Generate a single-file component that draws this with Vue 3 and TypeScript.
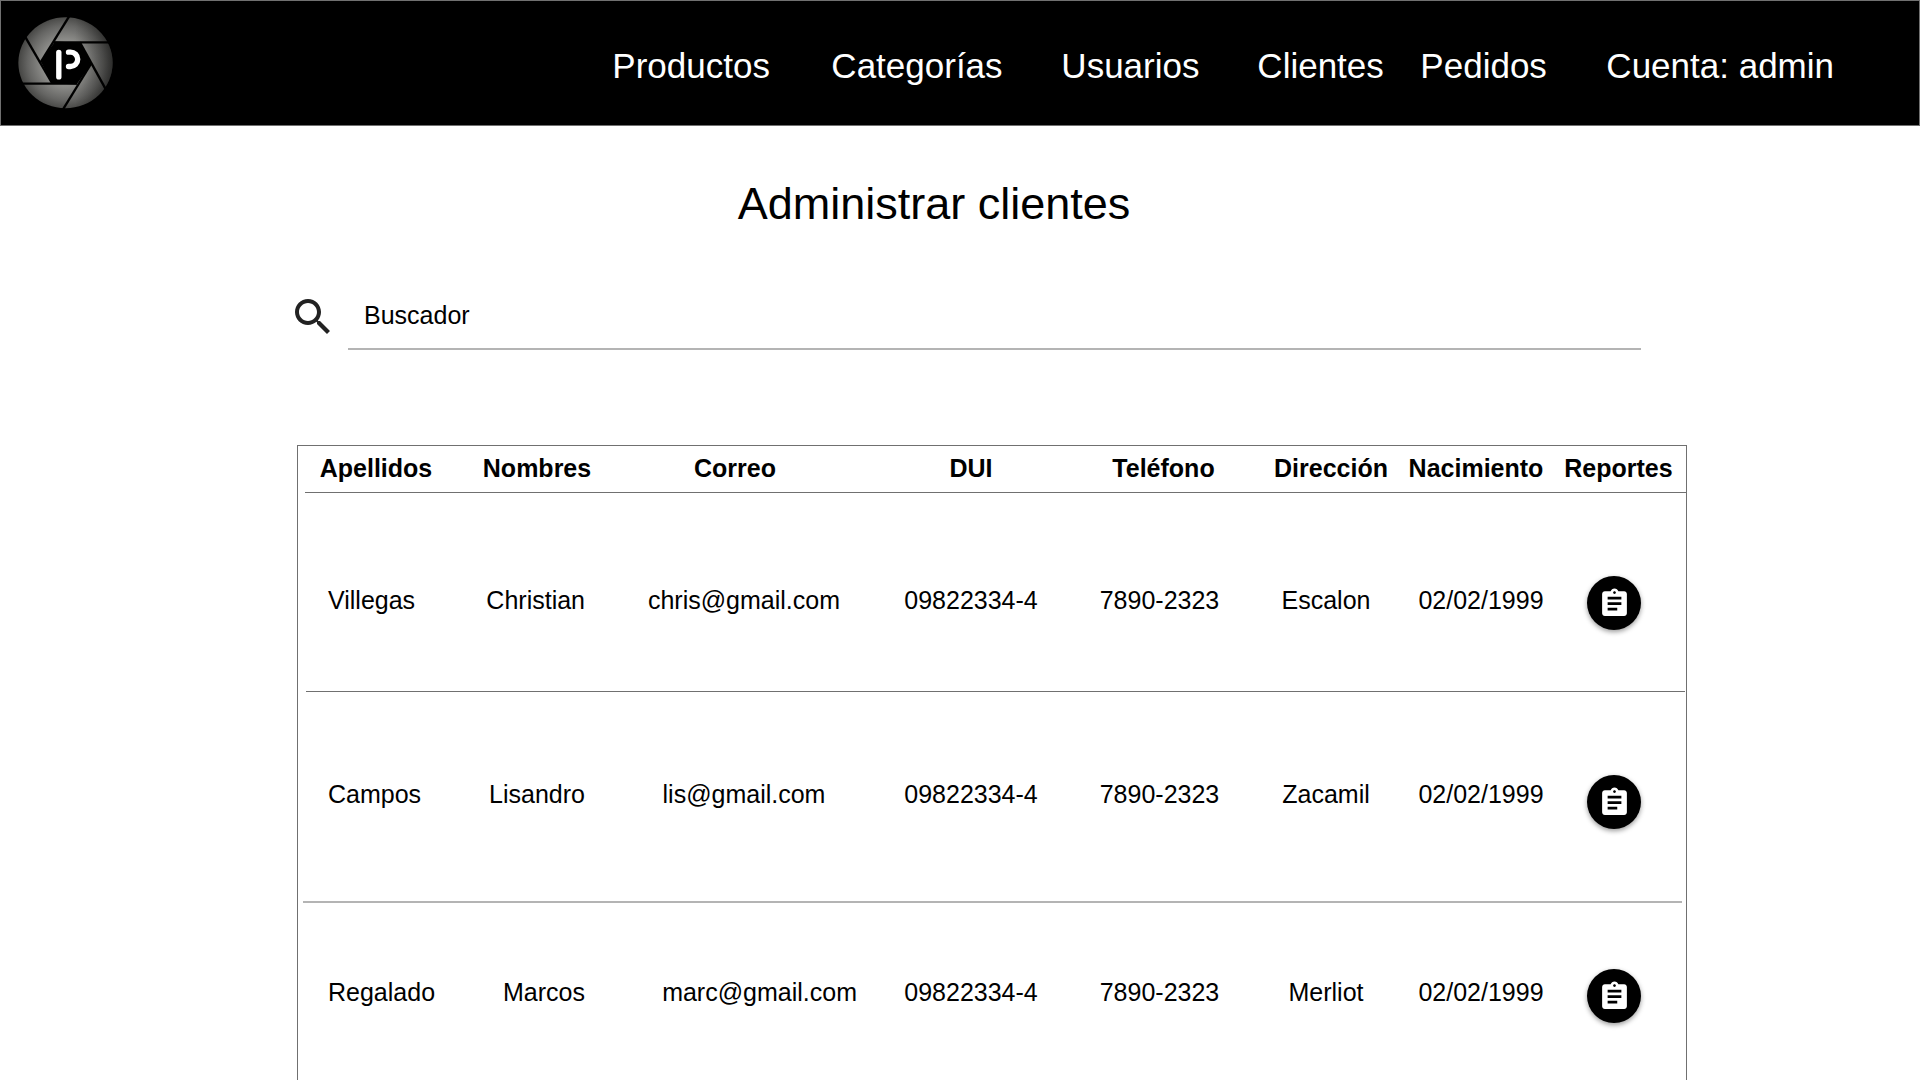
<script setup lang="ts">
import { ref } from 'vue'

interface Cliente {
  apellidos: string
  nombres: string
  correo: string
  dui: string
  telefono: string
  direccion: string
  nacimiento: string
}

const enlaces: string[] = ['Productos', 'Categorías', 'Usuarios', 'Clientes', 'Pedidos', 'Cuenta: admin']

const clientes: Cliente[] = [
  { apellidos: 'Villegas', nombres: 'Christian', correo: 'chris@gmail.com', dui: '09822334-4', telefono: '7890-2323', direccion: 'Escalon', nacimiento: '02/02/1999' },
  { apellidos: 'Campos', nombres: 'Lisandro', correo: 'lis@gmail.com', dui: '09822334-4', telefono: '7890-2323', direccion: 'Zacamil', nacimiento: '02/02/1999' },
  { apellidos: 'Regalado', nombres: 'Marcos', correo: 'marc@gmail.com', dui: '09822334-4', telefono: '7890-2323', direccion: 'Merliot', nacimiento: '02/02/1999' },
]

const busqueda = ref('')
</script>

<template>
  <div class="page">
    <header class="topbar">
      <a class="brand" href="#" aria-label="Inicio">
        <svg class="logo" viewBox="54 51 284 275" preserveAspectRatio="none" aria-hidden="true">
          <defs>
            <radialGradient id="metal" gradientUnits="userSpaceOnUse" cx="196" cy="188" r="141">
              <stop offset="0" stop-color="#a2a29f" />
              <stop offset="0.5" stop-color="#8b8b88" />
              <stop offset="0.8" stop-color="#656563" />
              <stop offset="1" stop-color="#454543" />
            </radialGradient>
            <linearGradient id="shade" x1="0" y1="0" x2="1" y2="0">
              <stop offset="0.6" stop-color="#000" stop-opacity="0" />
              <stop offset="1" stop-color="#000" stop-opacity="0.35" />
            </linearGradient>
          </defs>
          <ellipse cx="196" cy="188" rx="141" ry="136" fill="url(#metal)" />
          <ellipse cx="196" cy="188" rx="141" ry="136" fill="url(#shade)" />
          <path d="M165 124 240 128 273 192 229 253 154 249 122 183Z" fill="#000" />
          <g stroke="#000" stroke-width="7">
            <path d="M207 49 122 186" />
            <path d="M160 127H326" />
            <path d="M239 127 317 268" />
            <path d="M273 190 188 328" />
            <path d="M231 250H64" />
            <path d="M156 249 76 111" />
          </g>
          <g fill="none" stroke="#fff" stroke-width="16" stroke-linecap="round">
            <path d="M176 157V230" />
            <path d="M205 156H211A21 21 0 0 1 211 199H205" />
          </g>
        </svg>
      </a>
      <nav class="menu" aria-label="Principal">
        <a v-for="enlace in enlaces" :key="enlace" href="#">{{ enlace }}</a>
      </nav>
    </header>

    <h1 class="title">Administrar clientes</h1>

    <main class="content">
      <form class="search" role="search" @submit.prevent>
        <label for="buscador" aria-label="Buscador">
          <svg viewBox="0 0 24 24" aria-hidden="true">
            <path d="M15.5 14h-.79l-.28-.27C15.41 12.59 16 11.11 16 9.5 16 5.91 13.09 3 9.5 3S3 5.91 3 9.5 5.91 16 9.5 16c1.61 0 3.09-.59 4.23-1.57l.27.28v.79l5 4.99L20.49 19l-4.99-5zm-6 0C7.01 14 5 11.99 5 9.5S7.01 5 9.5 5 14 7.01 14 9.5 11.99 14 9.5 14z" />
          </svg>
        </label>
        <input id="buscador" v-model="busqueda" type="text" placeholder="Buscador" />
      </form>

      <section class="panel">
        <table>
          <colgroup>
            <col class="w-apellidos" />
            <col class="w-nombres" />
            <col class="w-correo" />
            <col class="w-dui" />
            <col class="w-telefono" />
            <col class="w-direccion" />
            <col class="w-nacimiento" />
            <col class="w-reportes" />
          </colgroup>
          <thead>
            <tr>
              <th scope="col">Apellidos</th>
              <th scope="col">Nombres</th>
              <th scope="col" class="correo">Correo</th>
              <th scope="col">DUI</th>
              <th scope="col" class="telefono">Teléfono</th>
              <th scope="col" class="direccion">Dirección</th>
              <th scope="col" class="nacimiento">Nacimiento</th>
              <th scope="col" class="reportes">Reportes</th>
            </tr>
          </thead>
          <tbody>
            <tr v-for="cliente in clientes" :key="cliente.apellidos">
              <td class="apellidos">{{ cliente.apellidos }}</td>
              <td class="nombres">{{ cliente.nombres }}</td>
              <td class="correo">{{ cliente.correo }}</td>
              <td>{{ cliente.dui }}</td>
              <td>{{ cliente.telefono }}</td>
              <td>{{ cliente.direccion }}</td>
              <td>{{ cliente.nacimiento }}</td>
              <td class="reportes">
                <button type="button" :aria-label="`Reporte de ${cliente.nombres} ${cliente.apellidos}`">
                  <svg viewBox="0 0 24 24" aria-hidden="true">
                    <path d="M19 3h-4.18C14.4 1.84 13.3 1 12 1c-1.3 0-2.4.84-2.82 2H5c-1.1 0-2 .9-2 2v14c0 1.1.9 2 2 2h14c1.1 0 2-.9 2-2V5c0-1.1-.9-2-2-2zm-7 0c.55 0 1 .45 1 1s-.45 1-1 1-1-.45-1-1 .45-1 1-1zm2 14H7v-2h7v2zm3-4H7v-2h10v2zm0-4H7V7h10v2z" />
                  </svg>
                </button>
              </td>
            </tr>
          </tbody>
        </table>
      </section>
    </main>
  </div>
</template>

<style>
body {
  margin: 0;
  background: #fff;
}
</style>

<style scoped>
.page {
  display: flex;
  flex-direction: column;
  min-height: 100vh;
  box-sizing: border-box;
  color: #000;
  font-family: "Liberation Sans", Arial, sans-serif;
  font-size: 25px;
  line-height: 28px;
}

.topbar {
  display: flex;
  align-items: center;
  justify-content: space-between;
  box-sizing: border-box;
  height: 126px;
  padding: 0 85px 0 17px;
  border: 1px solid #707070;
  background: #000;
}

.brand {
  display: flex;
}

.logo {
  width: 95px;
  height: 92px;
}

.menu {
  display: grid;
  grid-template-columns: 219px 230px 196px 163px 186px auto;
  padding-top: 6px;
}

.menu a {
  color: #fff;
  font-size: 35px;
  line-height: 40px;
  text-decoration: none;
  white-space: nowrap;
}

.title {
  margin: 50px 52px 0 0;
  font-size: 45px;
  font-weight: 400;
  line-height: 56px;
  text-align: center;
}

.content {
  display: flex;
  flex: 1;
  flex-direction: column;
  padding: 58px 233px 0 297px;
}

.search {
  display: flex;
  align-items: flex-start;
  margin: 0 46px 0 -8px;
}

.search label {
  display: flex;
  margin: 3px 11px 0 0;
}

.search svg {
  width: 48px;
  height: 48px;
  fill: #222;
}

.search input {
  flex: 1;
  min-width: 0;
  height: 60px;
  box-sizing: border-box;
  padding: 0 16px 8px;
  border: 0;
  border-bottom: 2px solid #b4b4b4;
  outline: 0;
  background: none;
  color: #000;
  font: inherit;
}

.search input::placeholder {
  color: #000;
  opacity: 1;
}

.panel {
  flex: 1;
  margin-top: 95px;
  border: 1px solid #707070;
  border-bottom: 0;
}

table {
  width: 100%;
  border-spacing: 0;
  table-layout: fixed;
}

.w-apellidos { width: 156px; }
.w-nombres { width: 166px; }
.w-correo { width: 248px; }
.w-dui { width: 206px; }
.w-telefono { width: 171px; }
.w-direccion { width: 162px; }
.w-nacimiento { width: 148px; }
.w-reportes { width: 131px; }

th,
td {
  box-sizing: border-box;
  padding: 0;
  text-align: center;
  white-space: nowrap;
}

th {
  height: 47px;
  padding-bottom: 3px;
  font-weight: 700;
  vertical-align: middle;
}

th.correo { padding-right: 18px; }
th.telefono { padding-left: 8px; }
th.direccion { padding-left: 10px; }
th.nacimiento { padding-right: 10px; }
th.reportes { padding-right: 4px; }

/* row rules start a little inside the left edge of the frame */
thead tr {
  background: linear-gradient(#707070, #707070) no-repeat 7px 100% / calc(100% - 7px) 1px;
}

tbody tr:nth-child(1) {
  --row-height: 199px;
  --text-top: 93px;
  --button-top: 83px;
  background: linear-gradient(#707070, #707070) no-repeat 8px 100% / calc(100% - 9px) 1px;
}

tbody tr:nth-child(2) {
  --row-height: 211px;
  --text-top: 88px;
  --button-top: 83px;
  background: linear-gradient(#b4b4b4, #b4b4b4) no-repeat 5px 100% / calc(100% - 9px) 2px;
}

tbody tr:nth-child(3) {
  --row-height: 177px;
  --text-top: 75px;
  --button-top: 66px;
}

td {
  height: var(--row-height);
  padding-top: var(--text-top);
  vertical-align: top;
}

td.apellidos {
  padding-left: 30px;
  text-align: left;
}

td.nombres {
  padding-right: 35px;
  text-align: right;
}

tr:last-child td.correo {
  padding-right: 11px;
  text-align: right;
}

td.reportes {
  padding-top: var(--button-top);
  padding-right: 13px;
}

td button {
  display: flex;
  align-items: center;
  justify-content: center;
  width: 54px;
  height: 54px;
  margin: 0 auto;
  padding: 0;
  border: 0;
  border-radius: 50%;
  background: #000;
  box-shadow: 0 2px 5px rgba(0, 0, 0, 0.4);
  cursor: pointer;
}

td button svg {
  width: 33px;
  height: 33px;
  fill: #fff;
}
</style>
